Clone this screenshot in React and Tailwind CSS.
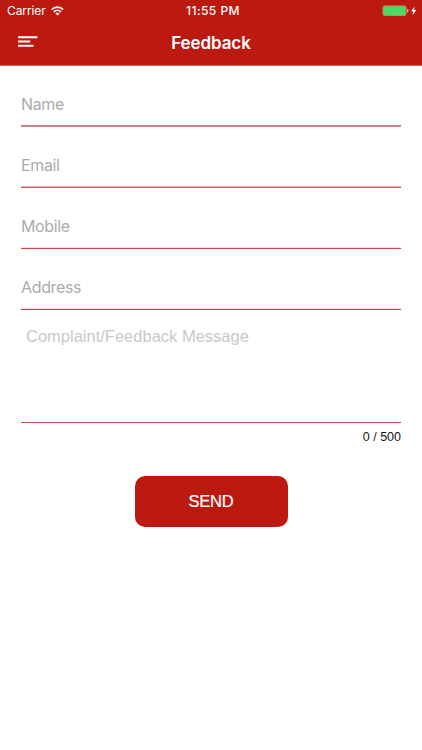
const fields = [
  { label: "Name", rule: "border-y border-t-[#d3777e] border-b-[#cf8b91]" },
  { label: "Email", rule: "border-y border-t-[#efb9bc] border-b-[#c5535b]" },
  { label: "Mobile", rule: "border-y border-t-[#f8dcdd] border-b-[#c2464e]" },
  { label: "Address", rule: "border-y border-t-[#f8dcdd] border-b-[#c2464e]" },
];

function StatusBar() {
  return (
    <div className="grid h-[22px] grid-cols-3 items-center pl-[7px] pr-[5px] text-[12px] leading-[22px]">
      <div className="flex items-center gap-[5px]">
        <span className="-tracking-[0.1px]">Carrier</span>
        <svg width="13" height="10" viewBox="0 0 13 10" fill="none" stroke="currentColor" strokeWidth="1.7">
          <path d="M.8 3.5a8.2 8.2 0 0 1 11.4 0" />
          <path d="M2.9 5.9a5.2 5.2 0 0 1 7.2 0" />
          <path d="M6.5 9.6 4.4 7.5a3.1 3.1 0 0 1 4.2 0Z" fill="currentColor" stroke="none" />
        </svg>
      </div>
      <span className="whitespace-nowrap pl-[2px] text-center font-medium tracking-[0.45px]">11:55 PM</span>
      <div className="flex items-center justify-end">
        <svg width="35" height="12" viewBox="0 0 35 12">
          <rect x="1" y=".9" width="23.1" height="9.6" rx="1.6" fill="#4cd964" stroke="#b98a62" />
          <path d="M25.2 4c1.8.3 1.8 3.1 0 3.4Z" fill="#f4c9c4" />
          <path d="M32.8 1.4 29 6.3h2.2l-.8 3.9 4-5.1H32Z" fill="#fff" />
        </svg>
      </div>
    </div>
  );
}

export default function App() {
  return (
    <div className="flex h-[750px] w-[422px] flex-col overflow-hidden bg-white font-['Inter',sans-serif]">
      <header className="h-[66px] border-b border-[#d4675f] bg-[#bc1a10] text-white">
        <StatusBar />
        <div className="grid h-[42px] grid-cols-3 items-center px-[18px]">
          <button aria-label="Menu" className="w-5">
            <svg width="20" height="12" viewBox="0 0 20 12" className="mb-[3px] block" fill="currentColor">
              <rect x="0" y=".2" width="19.5" height="2" rx=".6" />
              <rect x="0" y="4.5" width="12.2" height="2" rx=".6" />
              <rect x="0" y="8.8" width="15.6" height="2" rx=".6" />
            </svg>
          </button>
          <h1 className="text-center text-[17px] font-semibold leading-[22px] tracking-[-0.1px]">Feedback</h1>
        </div>
      </header>
      <main className="flex flex-col px-[21px]">
        {fields.map(({ label, rule }) => (
          <div key={label} className="flex h-[61px] flex-col justify-end">
            <div className="h-8 text-[16px] leading-[22px] tracking-[-0.35px] text-[#ababab]">{label}</div>
            <div className={rule} />
          </div>
        ))}
        <div className="h-[113px] border-b border-[#c2464e] pl-[5px] pt-[15px] font-['Liberation_Sans',sans-serif] text-[16.5px] leading-[22px] text-[#c9c9c9]">
          Complaint/Feedback Message
        </div>
        <div className="pt-[6px] text-right font-['Liberation_Sans',sans-serif] text-[12.5px] leading-[16px] text-[#151515]">
          0 / 500
        </div>
        <button className="mt-[31px] h-[51px] w-[153px] self-center rounded-[10px] bg-[#bc1a10] font-['Liberation_Sans',sans-serif] text-[16.5px] tracking-[-0.2px] text-white [-webkit-text-stroke:0.2px_white]">
          SEND
        </button>
      </main>
    </div>
  );
}
